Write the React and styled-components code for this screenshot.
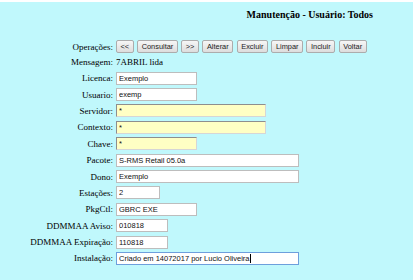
import React from "react";
import styled, { createGlobalStyle } from "styled-components";

const GlobalStyle = createGlobalStyle`
  body {
    margin: 0;
    background: #c0f8fc;
  }
`;

const Page = styled.div`
  min-height: 280px;
  box-sizing: border-box;
  border-top: 2px solid #ffffff;
  background: #c0f8fc;
  font-family: "Liberation Serif", "Times New Roman", serif;
  color: #000;
`;

const Header = styled.div`
  display: flex;
  justify-content: flex-end;
  padding: 7px 40px 0 0;
`;

const Title = styled.h1`
  margin: 0;
  font-size: 10px;
  font-weight: bold;
  line-height: 12px;
`;

const Form = styled.div`
  display: grid;
  grid-template-columns: 113px 1fr;
  grid-template-rows: 15.5px 15.5px;
  grid-auto-rows: 16.4px;
  column-gap: 3px;
  align-items: center;
  margin-top: 18px;
`;

const Label = styled.span`
  font-size: 9px;
  text-align: right;
  white-space: nowrap;
`;

const Text = styled.span`
  font-size: 9px;
  white-space: nowrap;
`;

const Buttons = styled.div`
  display: flex;
  gap: 3.5px;
`;

const Button = styled.button`
  height: 13px;
  margin: 0;
  padding: 0 3.5px;
  font-family: "Liberation Sans", Arial, sans-serif;
  font-size: 7.4px;
  line-height: 11px;
  color: #222;
  background: linear-gradient(#f6f6f6, #dddddd);
  border: 1px solid #acacac;
  border-radius: 2px;
  cursor: pointer;
`;

const FieldWrap = styled.div`
  position: relative;
  width: max-content;
`;

const Field = styled.input`
  box-sizing: border-box;
  display: block;
  width: ${({ $w }) => $w}px;
  height: 13px;
  margin: 0;
  padding: 0 2px;
  font-family: "Liberation Sans", Arial, sans-serif;
  font-size: 7.5px;
  color: #111;
  background: ${({ $required }) => ($required ? "#ffffc4" : "#ffffff")};
  border: 1px solid;
  border-color: ${({ $required, $focus }) =>
    $focus
      ? "#6d9fdc"
      : $required
      ? "#8e8e8e #d6d6d6 #d6d6d6 #8e8e8e"
      : "#bdbdbd"};
  outline: none;
`;

const Caret = styled.span`
  position: absolute;
  top: 2px;
  left: ${({ $at }) => $at}px;
  width: 1px;
  height: 9px;
  background: #000;
`;

const operations = ["<<", "Consultar", ">>", "Alterar", "Excluir", "Limpar", "Incluir", "Voltar"];

const fields = [
  { label: "Licenca:", value: "Exemplo", w: 81 },
  { label: "Usuario:", value: "exemp", w: 81 },
  { label: "Servidor:", value: "*", w: 150, required: true },
  { label: "Contexto:", value: "*", w: 150, required: true },
  { label: "Chave:", value: "*", w: 81, required: true },
  { label: "Pacote:", value: "S-RMS Retail 05.0a", w: 183 },
  { label: "Dono:", value: "Exemplo", w: 183 },
  { label: "Estações:", value: "2", w: 44 },
  { label: "PkgCtl:", value: "GBRC EXE", w: 81 },
  { label: "DDMMAA Aviso:", value: "010818", w: 52 },
  { label: "DDMMAA Expiração:", value: "110818", w: 52 },
  { label: "Instalação:", value: "Criado em 14072017 por Lucio Oliveira", w: 183, focus: true, caret: 134 },
];

export default function App() {
  return (
    <Page>
      <GlobalStyle />
      <Header>
        <Title>Manutenção - Usuário: Todos</Title>
      </Header>
      <Form>
        <Label>Operações:</Label>
        <Buttons>
          {operations.map((op) => (
            <Button key={op}>{op}</Button>
          ))}
        </Buttons>
        <Label>Mensagem:</Label>
        <Text>7ABRIL lida</Text>
        {fields.map((f) => (
          <React.Fragment key={f.label}>
            <Label>{f.label}</Label>
            <FieldWrap>
              <Field
                defaultValue={f.value}
                $w={f.w}
                $required={f.required}
                $focus={f.focus}
              />
              {f.caret && <Caret $at={f.caret} />}
            </FieldWrap>
          </React.Fragment>
        ))}
      </Form>
    </Page>
  );
}
